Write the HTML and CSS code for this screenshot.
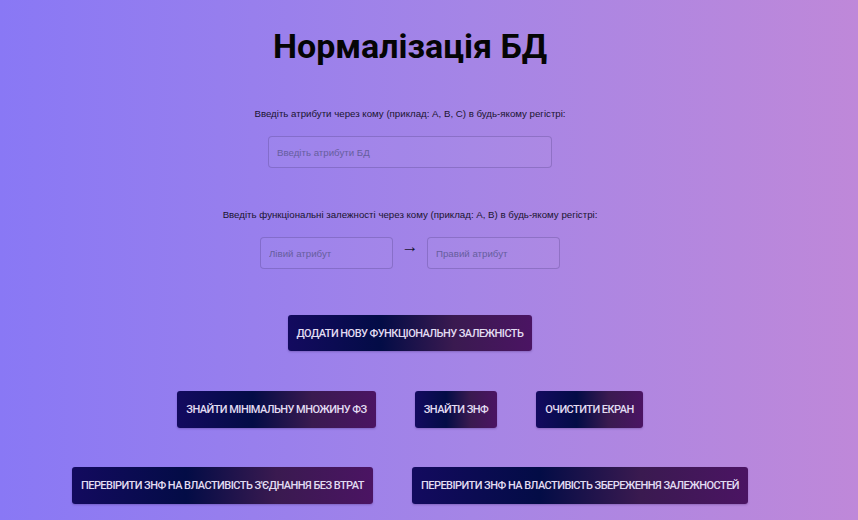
FILE: index.html
```html
<!DOCTYPE html>
<html lang="uk">
<head>
<meta charset="utf-8">
<title>Нормалізація БД</title>
<link rel="stylesheet" href="styles.css">
</head>
<body>
<main class="page">
  <h1 class="title">Нормалізація БД</h1>
  <p class="hint hint-attrs">Введіть атрибути через кому (приклад: A, B, C) в будь-якому регістрі:</p>
  <input class="field field-wide" type="text" placeholder="Введіть атрибути БД">
  <p class="hint hint-fd">Введіть функціональні залежності через кому (приклад: A, B) в будь-якому регістрі:</p>
  <div class="fd-row">
    <input class="field field-small" type="text" placeholder="Лівий атрибут">
    <span class="arrow">→</span>
    <input class="field field-small" type="text" placeholder="Правий атрибут">
  </div>
  <div class="btn-row row-1">
    <button class="btn">Додати нову функціональну залежність</button>
  </div>
  <div class="btn-row row-2">
    <button class="btn">Знайти мінімальну множину ФЗ</button>
    <button class="btn">Знайти ЗНФ</button>
    <button class="btn">Очистити екран</button>
  </div>
  <div class="btn-row row-3">
    <button class="btn">Перевірити ЗНФ на властивість з'єднання без втрат</button>
    <button class="btn">Перевірити ЗНФ на властивість збереження залежностей</button>
  </div>
</main>
</body>
</html>
```
FILE: styles.css
```css
html, body {
  margin: 0;
  padding: 0;
  height: 100%;
}
body {
  background: linear-gradient(90deg, #8978f5 0%, #a585e6 55%, #bf88d9 100%);
  font-family: "Liberation Sans", Arial, sans-serif;
  color: #111;
  overflow: hidden;
}
.page {
  width: 820px;
  display: flex;
  flex-direction: column;
  align-items: center;
}
.title {
  margin: 24px 0 0;
  font-family: Roboto, "Noto Sans", sans-serif;
  font-weight: 700;
  font-size: 34px;
  line-height: 44px;
  color: #050505;
}
.hint {
  margin: 0;
  font-size: 9.7px;
  line-height: 14px;
  color: #1a1430;
}
.hint-attrs { margin-top: 39px; }
.hint-fd { margin-top: 40px; }
.field {
  box-sizing: border-box;
  height: 32px;
  margin: 0;
  padding: 0 8px;
  border: 1px solid rgba(70, 50, 120, 0.28);
  border-radius: 4px;
  background: rgba(255, 255, 255, 0.03);
  font-family: "Liberation Sans", Arial, sans-serif;
  font-size: 9.7px;
  color: #222;
  outline: none;
}
.field::placeholder { color: #665e9e; }
.field-wide {
  width: 284px;
  margin-top: 15px;
}
.fd-row {
  margin-top: 15px;
  display: flex;
  align-items: flex-start;
}
.field-small { width: 133px; }
.arrow {
  width: 34px;
  text-align: center;
  font-size: 17px;
  line-height: 20px;
  color: #1a1430;
}
.btn-row {
  display: flex;
  justify-content: center;
  gap: 39px;
}
.row-1 { margin-top: 46px; }
.row-2 { margin-top: 40px; }
.row-3 { margin-top: 39px; }
.btn {
  box-sizing: border-box;
  height: 37px;
  padding: 0 9px;
  border: none;
  border-radius: 3px;
  background: linear-gradient(90deg, #130a5f 0%, #030c46 38%, #3a1a50 68%, #4b1463 100%);
  color: #e2dcf2;
  font-family: Roboto, "Noto Sans", sans-serif;
  font-weight: 500;
  font-size: 11px;
  letter-spacing: -0.55px;
  text-transform: uppercase;
  box-shadow: 0 1px 2px rgba(40, 10, 80, 0.25);
}
.row-1 .btn { height: 36px; }
```
